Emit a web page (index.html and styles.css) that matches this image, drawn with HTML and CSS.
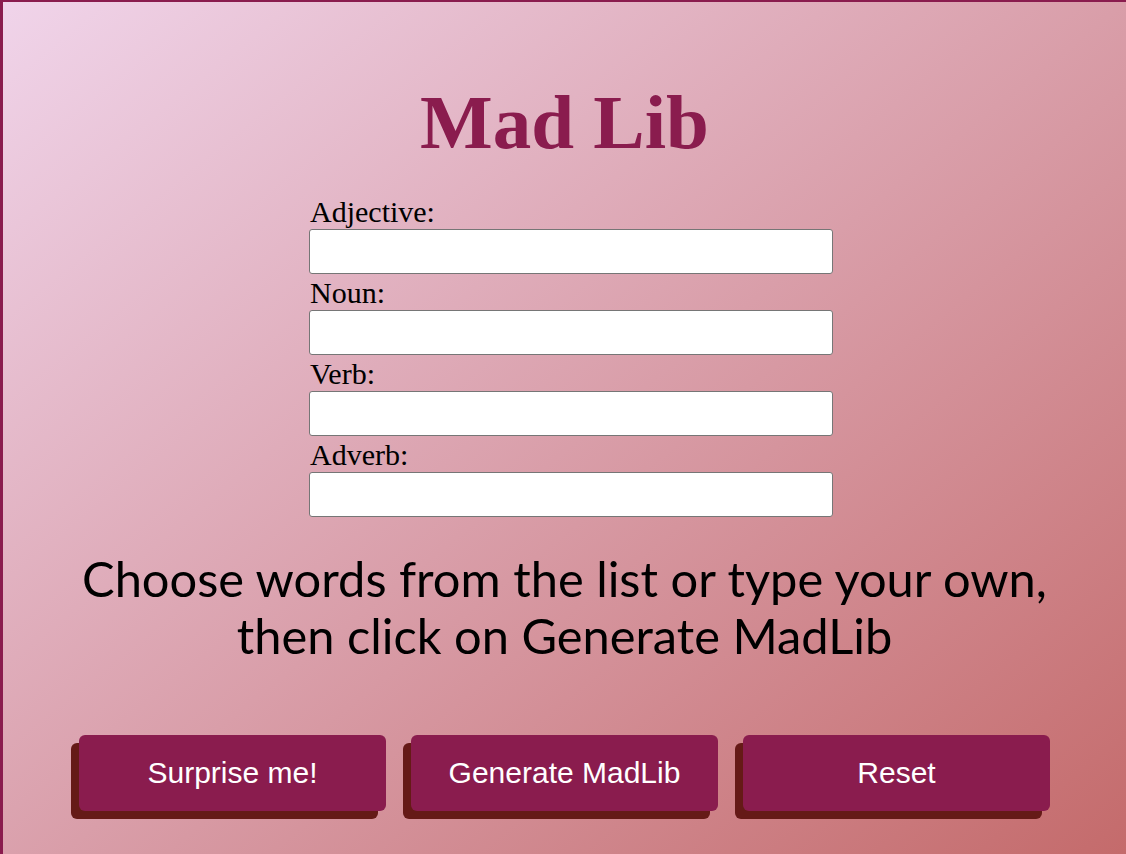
FILE: index.html
```html
<!DOCTYPE html>
<html lang="en">
<head>
<meta charset="utf-8">
<title>Mad Lib</title>
<link rel="stylesheet" href="styles.css">
</head>
<body>
<div class="page">
  <h1 class="title">Mad Lib</h1>
  <form class="form">
    <label class="label" for="adj">Adjective:</label>
    <input class="field" id="adj" type="text">
    <label class="label" for="noun">Noun:</label>
    <input class="field" id="noun" type="text">
    <label class="label" for="verb">Verb:</label>
    <input class="field" id="verb" type="text">
    <label class="label" for="adv">Adverb:</label>
    <input class="field" id="adv" type="text">
  </form>
  <p class="hint">Choose words from the list or type your own,<br>then click on Generate MadLib</p>
  <div class="buttons">
    <button class="btn" type="button">Surprise me!</button>
    <button class="btn" type="button">Generate MadLib</button>
    <button class="btn" type="button">Reset</button>
  </div>
</div>
</body>
</html>
```

FILE: styles.css
```css
html, body {
  margin: 0;
  padding: 0;
}
body {
  overflow: hidden;
}
.page {
  min-height: 900px;
  border-top: 2px solid #8a1c4e;
  border-left: 3px solid #8a1c4e;
  background: linear-gradient(to bottom right, #f0d4ea 0%, #d99ea9 50%, #c36868 100%);
  padding-top: 75px;
  box-sizing: border-box;
}
.title {
  margin: 0;
  text-align: center;
  font-family: "Liberation Serif", "Times New Roman", serif;
  font-weight: bold;
  font-size: 77px;
  line-height: 90px;
  color: #8a1c4e;
}
.form {
  margin: 28px 0 0 306px;
  width: 524px;
  display: flex;
  flex-direction: column;
}
.label {
  font-family: "Liberation Serif", "Times New Roman", serif;
  font-size: 30px;
  line-height: 34px;
  color: #000;
  padding-left: 1px;
}
.field {
  box-sizing: border-box;
  width: 524px;
  height: 45px;
  margin: 0 0 2px 0;
  border: 1px solid #767676;
  border-radius: 3px;
  background: #fff;
  font-size: 16px;
}
.hint {
  margin: 31px 0 0 0;
  text-align: center;
  font-family: Lato, "Noto Sans", sans-serif;
  font-size: 48.8px;
  line-height: 57px;
  color: #000;
}
.buttons {
  display: flex;
  justify-content: center;
  gap: 25px;
  margin-top: 71px;
}
.btn {
  width: 307px;
  height: 76px;
  border: none;
  border-radius: 6px;
  background: #8a1c4e;
  color: #fff;
  font-family: "Liberation Sans", Arial, sans-serif;
  font-size: 30px;
  box-shadow: -8px 8px 0 #651a17;
  padding: 0;
}
```
